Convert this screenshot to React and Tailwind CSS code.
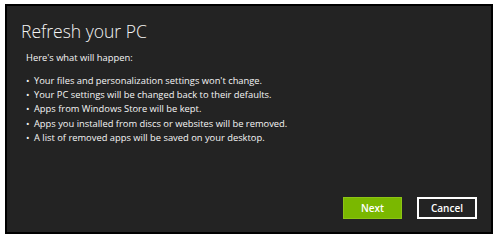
export default function App() {
  const items = [
    "Your files and personalization settings won't change.",
    'Your PC settings will be changed back to their defaults.',
    'Apps from Windows Store will be kept.',
    'Apps you installed from discs or websites will be removed.',
    'A list of removed apps will be saved on your desktop.',
  ]
  return (
    <div className="w-[496px] h-[237px] bg-white pt-[4px] pl-[5px] pr-[3px] pb-[3px]" style={{ fontFamily: '"Open Sans", "Noto Sans", sans-serif' }}>
      <div className="h-full border-2 border-black bg-[#232323] text-[#f5f5f5] flex flex-col pl-[14px] pr-[14px] pt-[13px] pb-[13px]">
        <h1 className="text-[17.5px] font-light leading-[24px]">Refresh your PC</h1>
        <p className="text-[9.35px] leading-[14px] mt-[8px] pl-[5px]">Here's what will happen:</p>
        <ul className="text-[9.35px] leading-[14.2px] mt-[9px] pl-[5px]">
          {items.map(t => (
            <li key={t}><span className="mr-[2px]">•</span> {t}</li>
          ))}
        </ul>
        <div className="mt-auto flex justify-end gap-[15px]">
          <button className="w-[59px] h-[22px] bg-[#7ab800] border border-[#8cc414] text-white text-[10px] font-semibold">Next</button>
          <button className="w-[60px] h-[22px] border-2 border-white text-white text-[10px] font-semibold">Cancel</button>
        </div>
      </div>
    </div>
  )
}
